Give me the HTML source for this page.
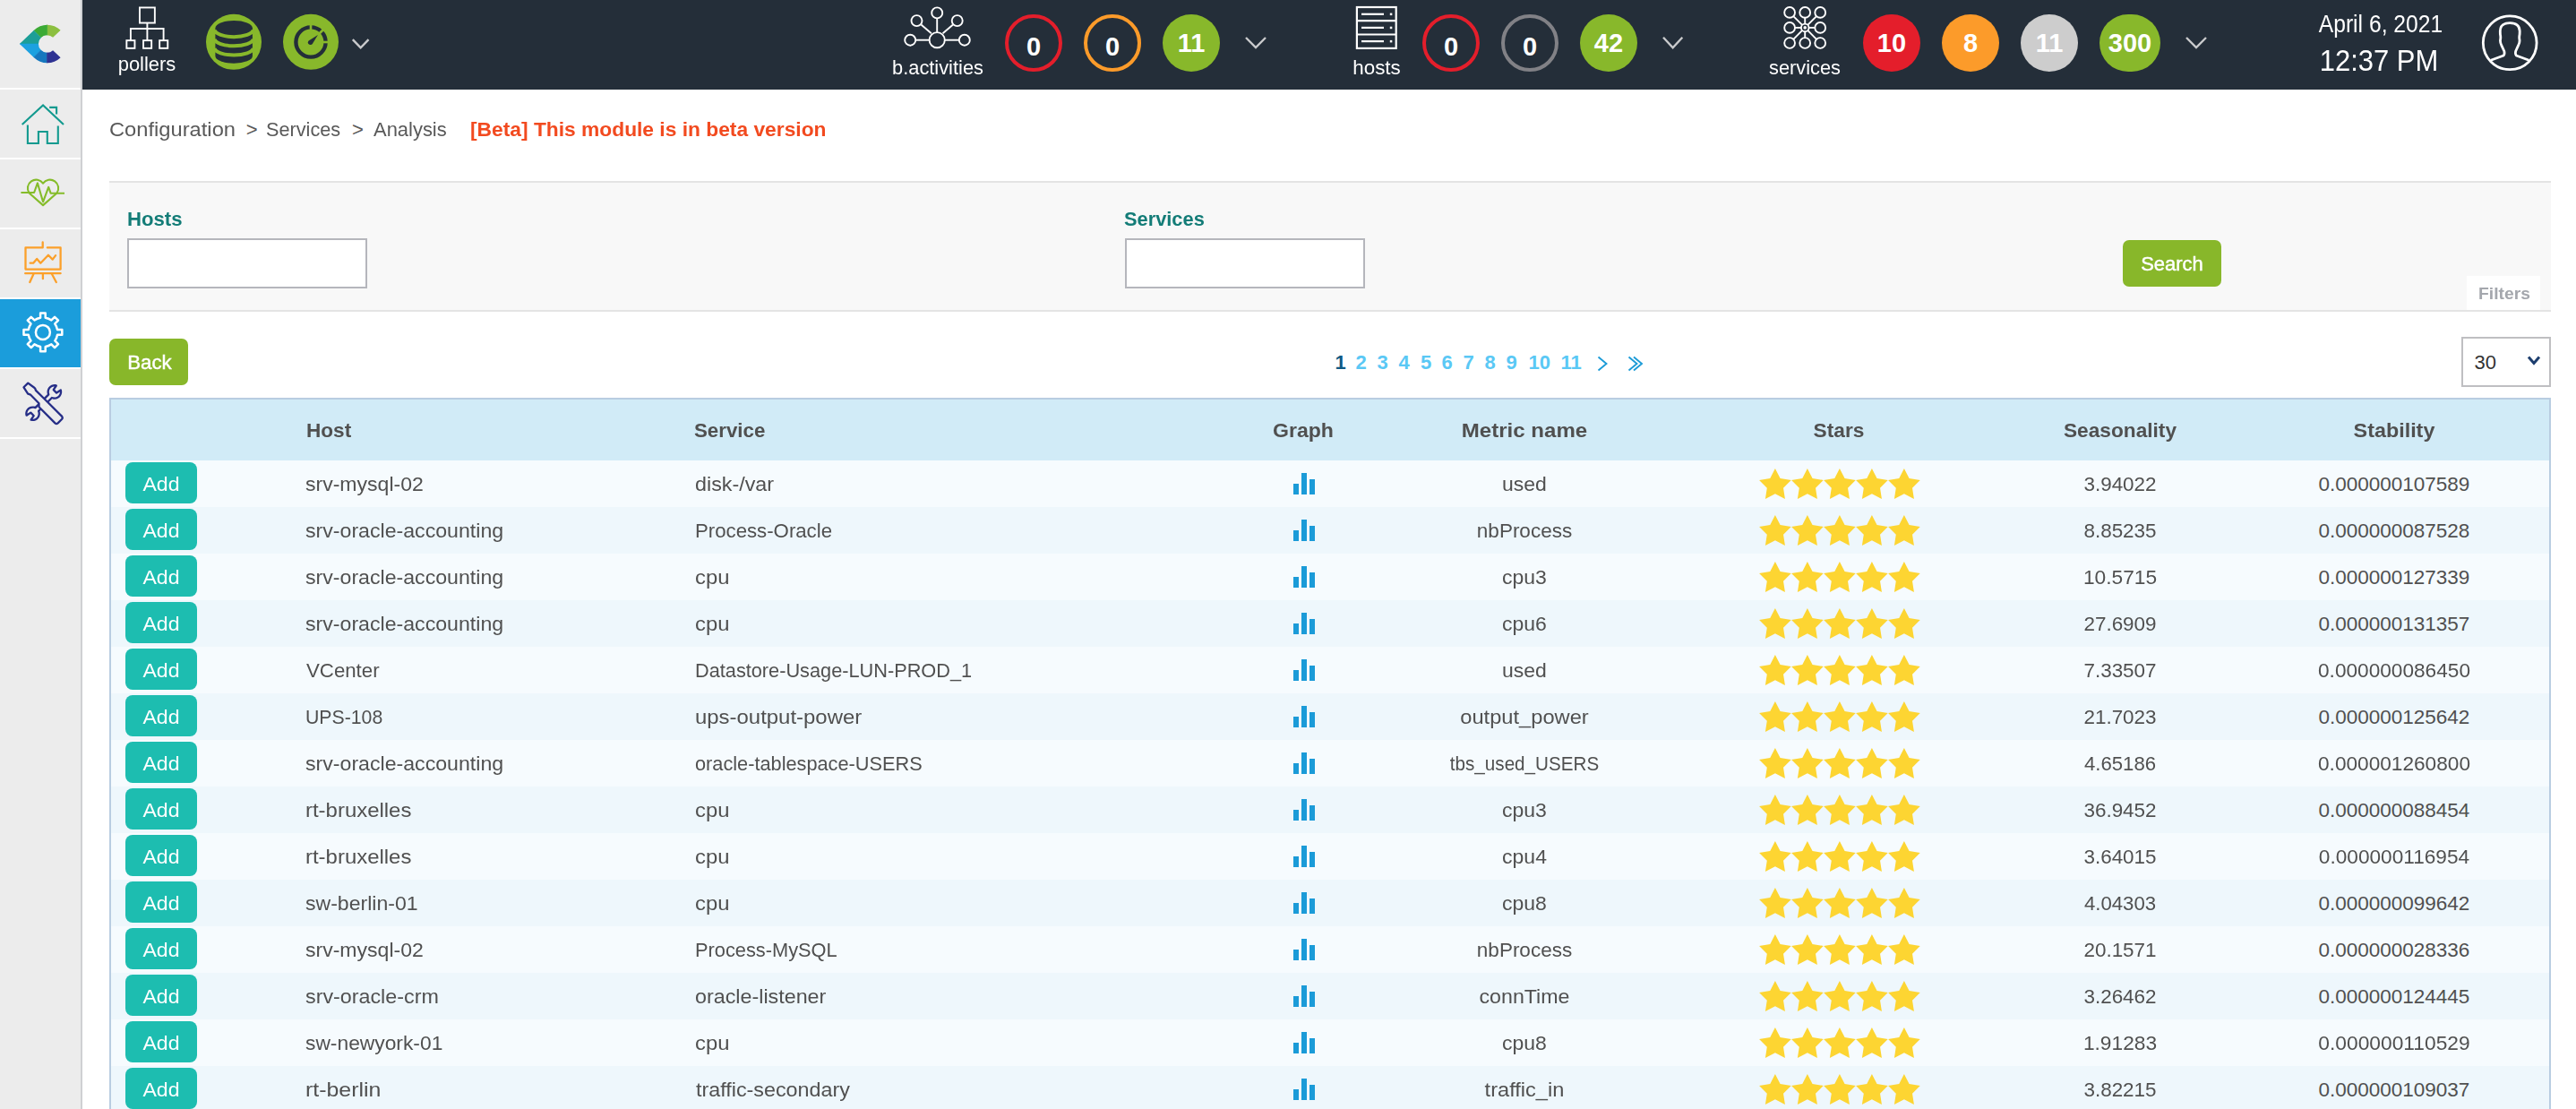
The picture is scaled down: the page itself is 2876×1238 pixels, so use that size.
<!DOCTYPE html>
<html><head><meta charset="utf-8"><title>Centreon - Analysis</title>
<style>
html,body{margin:0;padding:0;}
body{width:2876px;height:1238px;overflow:hidden;position:relative;background:#fff;font-family:"Liberation Sans", sans-serif;}
.b{position:absolute;}
.t{position:absolute;white-space:nowrap;}
</style></head><body>
<div class="b" style="left:0px;top:0px;width:90px;height:1238px;background:#ececec;"></div><div class="b" style="left:90px;top:0px;width:2px;height:1238px;background:#cfd0d3;"></div><div class="b" style="left:0px;top:98px;width:90px;height:2px;background:#ffffff;"></div><div class="b" style="left:0px;top:176px;width:90px;height:2px;background:#ffffff;"></div><div class="b" style="left:0px;top:254px;width:90px;height:2px;background:#ffffff;"></div><div class="b" style="left:0px;top:332px;width:90px;height:2px;background:#ffffff;"></div><div class="b" style="left:0px;top:410px;width:90px;height:2px;background:#ffffff;"></div><div class="b" style="left:0px;top:488px;width:90px;height:2px;background:#ffffff;"></div><div class="b" style="left:0px;top:334px;width:90px;height:76px;background:#1b9ddb;"></div><div class="b" style="left:92px;top:0px;width:2784px;height:100px;background:#242e39;"></div><svg class="b" style="left:0;top:0" width="2876" height="1238" viewBox="0 0 2876 1238"><clipPath id="lc"><path d="M21.9,49.0 L37.9,33.8 A21.3,21.3 0 0 1 67.6,33.8 L59.1,41.8 A9.7,9.7 0 1 0 59.1,56.2 L67.6,64.2 A21.3,21.3 0 0 1 37.9,64.2 Z"/></clipPath><filter id="lb" x="-10%" y="-10%" width="120%" height="120%"><feGaussianBlur stdDeviation="0.6"/></filter><g filter="url(#lb)"><g clip-path="url(#lc)"><polygon points="52.6,49.0 52.6,-11.0 112.6,-11.0 112.6,49.0" fill="#8cbf3f" stroke="#8cbf3f" stroke-width="0.6"/><polygon points="52.6,49.0 52.6,-11.0 -7.399999999999999,-11.0" fill="#3aaa35" stroke="#3aaa35" stroke-width="0.6"/><polygon points="52.6,49.0 -7.399999999999999,-11.0 -7.399999999999999,49.0" fill="#1a9e97" stroke="#1a9e97" stroke-width="0.6"/><polygon points="52.6,49.0 -7.399999999999999,49.0 -7.399999999999999,109.0" fill="#1da1e0" stroke="#1da1e0" stroke-width="0.6"/><polygon points="52.6,49.0 -7.399999999999999,109.0 52.6,109.0" fill="#1377be" stroke="#1377be" stroke-width="0.6"/><polygon points="52.6,49.0 52.6,109.0 112.6,109.0 112.6,49.0" fill="#2e3192" stroke="#2e3192" stroke-width="0.6"/></g></g><g fill="none" stroke="#139a8f" stroke-width="2.1" stroke-linecap="butt" stroke-linejoin="miter"><polyline points="24.7,139.1 48.05,117.4 71,139.1"/><polyline points="55.2,119.9 63.1,119.9 63.1,127.4"/><polyline points="30.9,139.4 30.9,160 42.9,160 42.9,147 52.8,147 52.8,160 64.8,160 64.8,140.4"/></g><g fill="none" stroke="#85bc2a" stroke-width="2.1" stroke-linejoin="round"><path d="M48.05,229.1 L32.6,215.5 A8.6,8.6 0 0 1 48.05,204.7 A8.6,8.6 0 0 1 63.5,215.5 Z"/><polyline points="23.4,215 38.1,215 41.9,204.4 48.05,225.3 54.2,208.9 56.6,215.7 72,215.7"/></g><g fill="none" stroke="#fba02a" stroke-width="2.3" stroke-linecap="round" stroke-linejoin="round"><polyline points="47.7,270.4 47.7,276.4 28.5,276.4 28.5,300.6 67.6,300.6 67.6,276.4 52.85,276.4"/><polyline points="33.65,293.7 37.1,293.7 41.2,288.9 45.3,293.7 53.9,284.8 58.7,289.6 62.1,285.1"/><line x1="28.2" y1="305.2" x2="67.6" y2="305.2"/><line x1="37.4" y1="306" x2="33.3" y2="315"/><line x1="47.9" y1="306" x2="47.9" y2="311.2"/><line x1="58" y1="306" x2="62.8" y2="315"/></g><path d="M45.10,354.74 L45.10,349.48 L50.70,349.48 L50.70,354.74 A16.4,16.4 0 0 1 57.35,357.49 L61.06,353.78 L65.02,357.74 L61.31,361.45 A16.4,16.4 0 0 1 64.06,368.10 L69.32,368.10 L69.32,373.70 L64.06,373.70 A16.4,16.4 0 0 1 61.31,380.35 L65.02,384.06 L61.06,388.02 L57.35,384.31 A16.4,16.4 0 0 1 50.70,387.06 L50.70,392.32 L45.10,392.32 L45.10,387.06 A16.4,16.4 0 0 1 38.45,384.31 L34.74,388.02 L30.78,384.06 L34.49,380.35 A16.4,16.4 0 0 1 31.74,373.70 L26.48,373.70 L26.48,368.10 L31.74,368.10 A16.4,16.4 0 0 1 34.49,361.45 L30.78,357.74 L34.74,353.78 L38.45,357.49 A16.4,16.4 0 0 1 45.10,354.74 Z" fill="none" stroke="#fff" stroke-width="2.5" stroke-linejoin="round"/><circle cx="47.9" cy="370.9" r="8.0" fill="none" stroke="#fff" stroke-width="2.5"/><path d="M43.12,458.85 L57.95,444.02 L57.95,444.02 L59.50,444.51 L61.12,444.63 L62.72,444.39 L64.23,443.80 L65.57,442.88 L66.67,441.69 L67.48,440.28 L67.95,438.73 L68.05,437.11 L67.80,435.51 L63.12,438.57 L59.73,435.18 L62.79,430.50 L61.19,430.25 L59.57,430.35 L58.02,430.82 L56.61,431.63 L55.42,432.73 L54.50,434.07 L53.91,435.58 L53.67,437.18 L53.79,438.80 L54.28,440.35 L39.45,455.18 L39.45,455.18 L37.90,454.69 L36.28,454.57 L34.68,454.81 L33.17,455.40 L31.83,456.32 L30.73,457.51 L29.92,458.92 L29.45,460.47 L29.35,462.09 L29.60,463.69 L34.28,460.63 L37.67,464.02 L34.61,468.70 L36.21,468.95 L37.83,468.85 L39.38,468.38 L40.79,467.57 L41.98,466.47 L42.90,465.13 L43.49,463.62 L43.73,462.02 L43.61,460.40 L43.12,458.85 Z" fill="none" stroke="#262e87" stroke-width="2.3" stroke-linejoin="round"/><g fill="#ececec" stroke="#262e87" stroke-width="2.3" stroke-linejoin="round" stroke-linecap="round"><path d="M26.5,432.3 L31.3,427.6 L38.6,433 Q39.8,434.2 39.8,435.6 L48.8,444.5 L69.2,464.9 Q70.4,466.5 69,468 L64.6,472.4 Q63,473.7 61.5,472.4 L43.5,454.2 L43.5,450.2 L34.2,440.8 Q33,440.1 31.2,439.6 Z"/></g><g fill="none" stroke="#fff" stroke-width="1.9"><rect x="155.95" y="8.45" width="16.9" height="17.1"/><line x1="164.4" y1="25.5" x2="164.4" y2="45"/><polyline points="145.9,45 145.9,32 182.6,32 182.6,45"/><rect x="141.35" y="45.15" width="9.1" height="8.7"/><rect x="160.05" y="45.15" width="9.1" height="8.7"/><rect x="178.15" y="45.15" width="9.1" height="8.7"/></g><circle cx="261" cy="46.8" r="31" fill="#88b82b"/><path d="M240.4,31.4 L240.4,62.5 A20.75,8.3 0 0 0 281.9,62.5 L281.9,31.4 A20.75,8.3 0 0 0 240.4,31.4 Z" fill="#242e39"/><g fill="none" stroke="#88b82b" stroke-width="4"><path d="M239.5,33.4 A21.7,8.3 0 0 0 282.8,33.4"/><path d="M239.5,43.6 A21.7,8.3 0 0 0 282.8,43.6"/><path d="M239.5,53.8 A21.7,8.3 0 0 0 282.8,53.8"/></g><circle cx="347" cy="46.8" r="31" fill="#88b82b"/><circle cx="347" cy="47" r="16.6" fill="none" stroke="#242e39" stroke-width="4.4"/><g stroke="#88b82b" stroke-width="2.6"><line x1="347" y1="47" x2="347" y2="25"/><line x1="347" y1="47" x2="363" y2="31"/><line x1="347" y1="47" x2="369" y2="47"/></g><circle cx="347" cy="47" r="12.3" fill="#88b82b"/><path d="M345,45.2 L354.9,39 L348.8,48.9 A2.7,2.7 0 1 1 345,45.2 Z" fill="#242e39"/><g fill="none" stroke="#fff" stroke-width="1.9"><circle cx="1046.2" cy="44.7" r="8.6"/><circle cx="1016.2" cy="44.7" r="6"/><circle cx="1076.8" cy="44.7" r="6"/><circle cx="1023.5" cy="23.1" r="6"/><circle cx="1068.7" cy="23.1" r="6"/><circle cx="1046.2" cy="14.4" r="6"/><line x1="1022.2" y1="44.7" x2="1037.6" y2="44.7"/><line x1="1054.8" y1="44.7" x2="1070.8" y2="44.7"/><line x1="1046.2" y1="20.4" x2="1046.2" y2="36.1"/><line x1="1028.4" y1="27.6" x2="1039.8" y2="37.2"/><line x1="1064" y1="27.6" x2="1052.6" y2="37.2"/></g><g fill="none" stroke="#fff" stroke-width="2.2"><rect x="1514.9" y="8" width="43.8" height="45.9"/><line x1="1514.9" y1="23.1" x2="1558.7" y2="23.1"/><line x1="1514.9" y1="38.5" x2="1558.7" y2="38.5"/><line x1="1520" y1="15.8" x2="1545" y2="15.8"/><line x1="1520" y1="30.9" x2="1545" y2="30.9"/><line x1="1520" y1="46.1" x2="1545" y2="46.1"/></g><g fill="#fff"><rect x="1551.8" y="14.6" width="2.5" height="2.5"/><rect x="1551.8" y="29.7" width="2.5" height="2.5"/><rect x="1551.8" y="44.9" width="2.5" height="2.5"/></g><g fill="none" stroke="#fff" stroke-width="1.9"><circle cx="1998.1" cy="13.9" r="5.9"/><circle cx="1998.1" cy="30.9" r="5.9"/><circle cx="1998.1" cy="48.0" r="5.9"/><circle cx="2015.2" cy="13.9" r="5.9"/><circle cx="2015.2" cy="48.0" r="5.9"/><circle cx="2032.2" cy="13.9" r="5.9"/><circle cx="2032.2" cy="30.9" r="5.9"/><circle cx="2032.2" cy="48.0" r="5.9"/><circle cx="2015.2" cy="30.9" r="4.3"/><line x1="2012.15" y1="27.87" x2="2002.28" y2="18.06"/><line x1="2010.90" y1="30.90" x2="2004.00" y2="30.90"/><line x1="2012.16" y1="33.94" x2="2002.27" y2="43.83"/><line x1="2015.20" y1="26.60" x2="2015.20" y2="19.80"/><line x1="2015.20" y1="35.20" x2="2015.20" y2="42.10"/><line x1="2018.24" y1="27.86" x2="2028.03" y2="18.07"/><line x1="2019.50" y1="30.90" x2="2026.30" y2="30.90"/><line x1="2018.23" y1="33.95" x2="2028.04" y2="43.82"/></g><circle cx="2015.2" cy="30.9" r="1.8" fill="#fff"/><g fill="none" stroke="#fff" stroke-width="2.8" stroke-linejoin="round"><circle cx="2802.2" cy="47.8" r="29.9"/><path d="M2780.9,67.2 L2795.2,62 Q2796.6,60.2 2795.8,57 L2792.8,50.6 Q2791,47.2 2791.6,44 Q2792.1,41.4 2791.4,38.2 L2791.3,34.8 Q2791.5,25.6 2802.2,25.6 Q2813,25.6 2813.2,34.8 L2813.1,38.2 Q2812.4,41.4 2812.9,44 Q2813.5,47.2 2811.6,50.6 L2808.7,57 Q2807.9,60.2 2809.3,62 L2823.5,67.2"/></g><polyline points="393.8,44.2 402.65,53.3 411.5,44.2" fill="none" stroke="#c9cacc" stroke-width="2.4"/><polyline points="1391,42 1402.0,53 1413,42" fill="none" stroke="#c9cacc" stroke-width="2.4"/><polyline points="1857,41.8 1867.65,53.3 1878.3,41.8" fill="none" stroke="#c9cacc" stroke-width="2.4"/><polyline points="2441,42 2452.0,53 2463,42" fill="none" stroke="#c9cacc" stroke-width="2.4"/></svg><div class="b" style="left:1122.0px;top:16.0px;width:64px;height:64px;border-radius:32.0px;border:4px solid #e41e2b;box-sizing:border-box;background:transparent;"></div><div class="t" id="t0" style="left:554.0px;width:1200px;text-align:center;top:38.2px;font-size:29px;line-height:29px;color:#fff;font-weight:bold;">0</div><div class="b" style="left:1210.0px;top:16.0px;width:64px;height:64px;border-radius:32.0px;border:4px solid #fc9b2a;box-sizing:border-box;background:transparent;"></div><div class="t" id="t1" style="left:642.0px;width:1200px;text-align:center;top:38.2px;font-size:29px;line-height:29px;color:#fff;font-weight:bold;">0</div><div class="b" style="left:1298.0px;top:16.0px;width:64px;height:64px;border-radius:32.0px;background:#88b82b;"></div><div class="t" id="t2" style="left:730.0px;width:1200px;text-align:center;top:34.3px;font-size:29px;line-height:29px;color:#fff;font-weight:bold;">11</div><div class="b" style="left:1588.0px;top:16.0px;width:64px;height:64px;border-radius:32.0px;border:4px solid #e41e2b;box-sizing:border-box;background:transparent;"></div><div class="t" id="t3" style="left:1020.0px;width:1200px;text-align:center;top:38.2px;font-size:29px;line-height:29px;color:#fff;font-weight:bold;">0</div><div class="b" style="left:1676.0px;top:16.0px;width:64px;height:64px;border-radius:32.0px;border:4px solid #818186;box-sizing:border-box;background:transparent;"></div><div class="t" id="t4" style="left:1108.0px;width:1200px;text-align:center;top:38.2px;font-size:29px;line-height:29px;color:#fff;font-weight:bold;">0</div><div class="b" style="left:1764.0px;top:16.0px;width:64px;height:64px;border-radius:32.0px;background:#88b82b;"></div><div class="t" id="t5" style="left:1196.0px;width:1200px;text-align:center;top:34.3px;font-size:29px;line-height:29px;color:#fff;font-weight:bold;">42</div><div class="b" style="left:2080.0px;top:16.0px;width:64px;height:64px;border-radius:32.0px;background:#e41e2b;"></div><div class="t" id="t6" style="left:1512.0px;width:1200px;text-align:center;top:34.3px;font-size:29px;line-height:29px;color:#fff;font-weight:bold;">10</div><div class="b" style="left:2168.0px;top:16.0px;width:64px;height:64px;border-radius:32.0px;background:#fc9b2a;"></div><div class="t" id="t7" style="left:1600.0px;width:1200px;text-align:center;top:34.3px;font-size:29px;line-height:29px;color:#fff;font-weight:bold;">8</div><div class="b" style="left:2256.0px;top:16.0px;width:64px;height:64px;border-radius:32.0px;background:#cdcdcd;"></div><div class="t" id="t8" style="left:1688.0px;width:1200px;text-align:center;top:34.3px;font-size:29px;line-height:29px;color:#fff;font-weight:bold;">11</div><div class="b" style="left:2344.0px;top:16.0px;width:68px;height:64px;border-radius:32.0px;background:#88b82b;"></div><div class="t" id="t9" style="left:1778.0px;width:1200px;text-align:center;top:34.3px;font-size:29px;line-height:29px;color:#fff;font-weight:bold;">300</div><div class="t" id="t10" style="left:-435.7px;width:1200px;text-align:center;top:62.4px;font-size:21.5px;line-height:21.5px;color:#fff;font-weight:normal;transform:scaleX(1.0199);transform-origin:50% 0;">pollers</div><div class="t" id="t11" style="left:446.8px;width:1200px;text-align:center;top:66.4px;font-size:21.5px;line-height:21.5px;color:#fff;font-weight:normal;transform:scaleX(1.0146);transform-origin:50% 0;">b.activities</div><div class="t" id="t12" style="left:936.8px;width:1200px;text-align:center;top:66.1px;font-size:21.5px;line-height:21.5px;color:#fff;font-weight:normal;transform:scaleX(1.0407);transform-origin:50% 0;">hosts</div><div class="t" id="t13" style="left:1415.3px;width:1200px;text-align:center;top:66.1px;font-size:21.5px;line-height:21.5px;color:#fff;font-weight:normal;transform:scaleX(1.0135);transform-origin:50% 0;">services</div><div class="t" id="t14" style="left:2057.9px;width:1200px;text-align:center;top:13.6px;font-size:27px;line-height:27px;color:#fff;font-weight:normal;transform:scaleX(0.9143);transform-origin:50% 0;">April 6, 2021</div><div class="t" id="t15" style="left:2055.8px;width:1200px;text-align:center;top:50.7px;font-size:33px;line-height:33px;color:#fff;font-weight:normal;transform:scaleX(0.9388);transform-origin:50% 0;">12:37 PM</div><div class="t" id="t16" style="left:121.6px;top:133.7px;font-size:22px;line-height:22px;color:#595959;font-weight:normal;transform:scaleX(1.0775);transform-origin:0 0;">Configuration</div><div class="t" id="t17" style="left:274.7px;top:133.7px;font-size:22px;line-height:22px;color:#595959;font-weight:normal;">&gt;</div><div class="t" id="t18" style="left:297.2px;top:133.7px;font-size:22px;line-height:22px;color:#595959;font-weight:normal;transform:scaleX(0.9859);transform-origin:0 0;">Services</div><div class="t" id="t19" style="left:393.0px;top:133.7px;font-size:22px;line-height:22px;color:#595959;font-weight:normal;">&gt;</div><div class="t" id="t20" style="left:417.0px;top:133.7px;font-size:22px;line-height:22px;color:#595959;font-weight:normal;transform:scaleX(0.9974);transform-origin:0 0;">Analysis</div><div class="t" id="t21" style="left:525.2px;top:133.7px;font-size:22px;line-height:22px;color:#f24a1f;font-weight:bold;transform:scaleX(1.0355);transform-origin:0 0;">[Beta] This module is in beta version</div><div class="b" style="left:122px;top:202px;width:2726px;height:146px;background:#f8f8f8;border-top:2px solid #e4e4e4;border-bottom:2px solid #e4e4e4;box-sizing:border-box;"></div><div class="t" id="t22" style="left:142.2px;top:234.1px;font-size:22px;line-height:22px;color:#137c77;font-weight:bold;transform:scaleX(1.0073);transform-origin:0 0;">Hosts</div><div class="t" id="t23" style="left:1255.2px;top:234.1px;font-size:22px;line-height:22px;color:#137c77;font-weight:bold;transform:scaleX(0.9916);transform-origin:0 0;">Services</div><div class="b" style="left:142px;top:266px;width:268px;height:56px;background:#fff;border:2px solid #b5b6bc;box-sizing:border-box;"></div><div class="b" style="left:1256px;top:266px;width:268px;height:56px;background:#fff;border:2px solid #b5b6bc;box-sizing:border-box;"></div><div class="b" style="left:2370px;top:268px;width:110px;height:52px;background:#88b72a;border-radius:7px;"></div><div class="t" id="t24" style="left:1824.8px;width:1200px;text-align:center;top:284.0px;font-size:22.5px;line-height:22.5px;color:#fff;font-weight:normal;transform:scaleX(0.9779);transform-origin:50% 0;-webkit-text-stroke:0.45px #fff;">Search</div><div class="b" style="left:2754px;top:308px;width:82px;height:38px;background:#fff;"></div><div class="t" id="t25" style="left:2195.7px;width:1200px;text-align:center;top:319.4px;font-size:18px;line-height:18px;color:#a4a7ad;font-weight:bold;transform:scaleX(1.0735);transform-origin:50% 0;">Filters</div><div class="b" style="left:122px;top:378px;width:88px;height:52px;background:#88b72a;border-radius:7px;"></div><div class="t" id="t26" style="left:-433.3px;width:1200px;text-align:center;top:393.6px;font-size:22.5px;line-height:22.5px;color:#fff;font-weight:normal;transform:scaleX(0.9881);transform-origin:50% 0;-webkit-text-stroke:0.45px #fff;">Back</div><div class="t" id="t27" style="left:1490.5px;top:394.0px;font-size:22px;line-height:22px;color:#0f5a84;font-weight:bold;">1</div><div class="t" id="t28" style="left:1513.5px;top:394.0px;font-size:22px;line-height:22px;color:#5ac8f5;font-weight:bold;">2</div><div class="t" id="t29" style="left:1537.5px;top:394.0px;font-size:22px;line-height:22px;color:#5ac8f5;font-weight:bold;">3</div><div class="t" id="t30" style="left:1561.5px;top:394.0px;font-size:22px;line-height:22px;color:#5ac8f5;font-weight:bold;">4</div><div class="t" id="t31" style="left:1586.0px;top:394.0px;font-size:22px;line-height:22px;color:#5ac8f5;font-weight:bold;">5</div><div class="t" id="t32" style="left:1609.5px;top:394.0px;font-size:22px;line-height:22px;color:#5ac8f5;font-weight:bold;">6</div><div class="t" id="t33" style="left:1633.5px;top:394.0px;font-size:22px;line-height:22px;color:#5ac8f5;font-weight:bold;">7</div><div class="t" id="t34" style="left:1657.5px;top:394.0px;font-size:22px;line-height:22px;color:#5ac8f5;font-weight:bold;">8</div><div class="t" id="t35" style="left:1681.5px;top:394.0px;font-size:22px;line-height:22px;color:#5ac8f5;font-weight:bold;">9</div><div class="t" id="t36" style="left:1706.5px;top:394.0px;font-size:22px;line-height:22px;color:#5ac8f5;font-weight:bold;">10</div><div class="t" id="t37" style="left:1742.5px;top:394.0px;font-size:22px;line-height:22px;color:#5ac8f5;font-weight:bold;">11</div><svg class="b" style="left:1770px;top:390px" width="80" height="30" viewBox="1770 390 80 30"><polyline points="1784.5,398.5 1793.5,406 1784.5,413.5" fill="none" stroke="#1c9bd7" stroke-width="1.9"/><polyline points="1818.5,398.5 1827.5,406 1818.5,413.5" fill="none" stroke="#1c9bd7" stroke-width="1.9"/><polyline points="1824,398.5 1833,406 1824,413.5" fill="none" stroke="#1c9bd7" stroke-width="1.9"/></svg><div class="b" style="left:2748px;top:376px;width:100px;height:56px;background:#fff;border:2px solid #bfbfc2;box-sizing:border-box;"></div><div class="t" id="t38" style="left:2762.5px;top:393.8px;font-size:22px;line-height:22px;color:#333;font-weight:normal;">30</div><svg class="b" style="left:2815px;top:390px" width="30" height="25" viewBox="2815 390 30 25"><polyline points="2823,398.5 2829,405.5 2835,398.5" fill="none" stroke="#1d3e6e" stroke-width="3"/></svg><div class="b" style="left:122px;top:444px;width:2726px;height:804px;border:2px solid #b9cde1;box-sizing:border-box;background:#fff;"></div><div class="b" style="left:124px;top:446px;width:2722px;height:68px;background:#d1ebf7;"></div><div class="t" id="t39" style="left:342.0px;top:470.0px;font-size:22px;line-height:22px;color:#505050;font-weight:bold;transform:scaleX(1.0256);transform-origin:0 0;">Host</div><div class="t" id="t40" style="left:775.0px;top:470.0px;font-size:22px;line-height:22px;color:#505050;font-weight:bold;transform:scaleX(1.0132);transform-origin:0 0;">Service</div><div class="t" id="t41" style="left:854.7px;width:1200px;text-align:center;top:470.0px;font-size:22px;line-height:22px;color:#505050;font-weight:bold;transform:scaleX(1.0476);transform-origin:50% 0;">Graph</div><div class="t" id="t42" style="left:1102.2px;width:1200px;text-align:center;top:470.0px;font-size:22px;line-height:22px;color:#505050;font-weight:bold;transform:scaleX(1.0933);transform-origin:50% 0;">Metric name</div><div class="t" id="t43" style="left:1453.0px;width:1200px;text-align:center;top:470.0px;font-size:22px;line-height:22px;color:#505050;font-weight:bold;transform:scaleX(1.0317);transform-origin:50% 0;">Stars</div><div class="t" id="t44" style="left:1766.8px;width:1200px;text-align:center;top:470.0px;font-size:22px;line-height:22px;color:#505050;font-weight:bold;transform:scaleX(1.0307);transform-origin:50% 0;">Seasonality</div><div class="t" id="t45" style="left:2072.9px;width:1200px;text-align:center;top:470.0px;font-size:22px;line-height:22px;color:#505050;font-weight:bold;transform:scaleX(1.0605);transform-origin:50% 0;">Stability</div><div class="b" style="left:124px;top:514px;width:2722px;height:52px;background:#f6fbfe;"></div><div class="b" style="left:140px;top:516px;width:80px;height:46px;background:#1dbdb0;border-radius:8px;"></div><div class="t" id="t46" style="left:-420.0px;width:1200px;text-align:center;top:529.9px;font-size:22.5px;line-height:22.5px;color:#fff;font-weight:normal;transform:scaleX(1.0264);transform-origin:50% 0;">Add</div><div class="t" id="t47" style="left:341.3px;top:529.9px;font-size:22.5px;line-height:22.5px;color:#505050;font-weight:normal;transform:scaleX(1.0236);transform-origin:0 0;">srv-mysql-02</div><div class="t" id="t48" style="left:775.7px;top:529.9px;font-size:22.5px;line-height:22.5px;color:#505050;font-weight:normal;transform:scaleX(1.0354);transform-origin:0 0;">disk-/var</div><div class="t" id="t49" style="left:1102.0px;width:1200px;text-align:center;top:529.9px;font-size:22.5px;line-height:22.5px;color:#505050;font-weight:normal;transform:scaleX(1.0213);transform-origin:50% 0;">used</div><div class="t" id="t50" style="left:1766.8px;width:1200px;text-align:center;top:529.9px;font-size:22.5px;line-height:22.5px;color:#505050;font-weight:normal;transform:scaleX(0.9977);transform-origin:50% 0;">3.94022</div><div class="t" id="t51" style="left:2072.9px;width:1200px;text-align:center;top:529.9px;font-size:22.5px;line-height:22.5px;color:#505050;font-weight:normal;transform:scaleX(1.0000);transform-origin:50% 0;">0.000000107589</div><div class="b" style="left:124px;top:566px;width:2722px;height:52px;background:#eef7fc;"></div><div class="b" style="left:140px;top:568px;width:80px;height:46px;background:#1dbdb0;border-radius:8px;"></div><div class="t" id="t52" style="left:-420.0px;width:1200px;text-align:center;top:581.9px;font-size:22.5px;line-height:22.5px;color:#fff;font-weight:normal;transform:scaleX(1.0264);transform-origin:50% 0;">Add</div><div class="t" id="t53" style="left:341.3px;top:581.9px;font-size:22.5px;line-height:22.5px;color:#505050;font-weight:normal;transform:scaleX(1.0282);transform-origin:0 0;">srv-oracle-accounting</div><div class="t" id="t54" style="left:775.7px;top:581.9px;font-size:22.5px;line-height:22.5px;color:#505050;font-weight:normal;transform:scaleX(0.9869);transform-origin:0 0;">Process-Oracle</div><div class="t" id="t55" style="left:1102.0px;width:1200px;text-align:center;top:581.9px;font-size:22.5px;line-height:22.5px;color:#505050;font-weight:normal;transform:scaleX(0.9996);transform-origin:50% 0;">nbProcess</div><div class="t" id="t56" style="left:1766.8px;width:1200px;text-align:center;top:581.9px;font-size:22.5px;line-height:22.5px;color:#505050;font-weight:normal;transform:scaleX(0.9977);transform-origin:50% 0;">8.85235</div><div class="t" id="t57" style="left:2072.9px;width:1200px;text-align:center;top:581.9px;font-size:22.5px;line-height:22.5px;color:#505050;font-weight:normal;transform:scaleX(1.0000);transform-origin:50% 0;">0.000000087528</div><div class="b" style="left:124px;top:618px;width:2722px;height:52px;background:#f6fbfe;"></div><div class="b" style="left:140px;top:620px;width:80px;height:46px;background:#1dbdb0;border-radius:8px;"></div><div class="t" id="t58" style="left:-420.0px;width:1200px;text-align:center;top:633.9px;font-size:22.5px;line-height:22.5px;color:#fff;font-weight:normal;transform:scaleX(1.0264);transform-origin:50% 0;">Add</div><div class="t" id="t59" style="left:341.3px;top:633.9px;font-size:22.5px;line-height:22.5px;color:#505050;font-weight:normal;transform:scaleX(1.0282);transform-origin:0 0;">srv-oracle-accounting</div><div class="t" id="t60" style="left:775.7px;top:633.9px;font-size:22.5px;line-height:22.5px;color:#505050;font-weight:normal;transform:scaleX(1.0588);transform-origin:0 0;">cpu</div><div class="t" id="t61" style="left:1102.0px;width:1200px;text-align:center;top:633.9px;font-size:22.5px;line-height:22.5px;color:#505050;font-weight:normal;transform:scaleX(1.0213);transform-origin:50% 0;">cpu3</div><div class="t" id="t62" style="left:1766.8px;width:1200px;text-align:center;top:633.9px;font-size:22.5px;line-height:22.5px;color:#505050;font-weight:normal;transform:scaleX(1.0104);transform-origin:50% 0;">10.5715</div><div class="t" id="t63" style="left:2072.9px;width:1200px;text-align:center;top:633.9px;font-size:22.5px;line-height:22.5px;color:#505050;font-weight:normal;transform:scaleX(1.0000);transform-origin:50% 0;">0.000000127339</div><div class="b" style="left:124px;top:670px;width:2722px;height:52px;background:#eef7fc;"></div><div class="b" style="left:140px;top:672px;width:80px;height:46px;background:#1dbdb0;border-radius:8px;"></div><div class="t" id="t64" style="left:-420.0px;width:1200px;text-align:center;top:685.9px;font-size:22.5px;line-height:22.5px;color:#fff;font-weight:normal;transform:scaleX(1.0264);transform-origin:50% 0;">Add</div><div class="t" id="t65" style="left:341.3px;top:685.9px;font-size:22.5px;line-height:22.5px;color:#505050;font-weight:normal;transform:scaleX(1.0282);transform-origin:0 0;">srv-oracle-accounting</div><div class="t" id="t66" style="left:775.7px;top:685.9px;font-size:22.5px;line-height:22.5px;color:#505050;font-weight:normal;transform:scaleX(1.0588);transform-origin:0 0;">cpu</div><div class="t" id="t67" style="left:1102.0px;width:1200px;text-align:center;top:685.9px;font-size:22.5px;line-height:22.5px;color:#505050;font-weight:normal;transform:scaleX(1.0213);transform-origin:50% 0;">cpu6</div><div class="t" id="t68" style="left:1766.8px;width:1200px;text-align:center;top:685.9px;font-size:22.5px;line-height:22.5px;color:#505050;font-weight:normal;transform:scaleX(0.9979);transform-origin:50% 0;">27.6909</div><div class="t" id="t69" style="left:2072.9px;width:1200px;text-align:center;top:685.9px;font-size:22.5px;line-height:22.5px;color:#505050;font-weight:normal;transform:scaleX(1.0000);transform-origin:50% 0;">0.000000131357</div><div class="b" style="left:124px;top:722px;width:2722px;height:52px;background:#f6fbfe;"></div><div class="b" style="left:140px;top:724px;width:80px;height:46px;background:#1dbdb0;border-radius:8px;"></div><div class="t" id="t70" style="left:-420.0px;width:1200px;text-align:center;top:737.9px;font-size:22.5px;line-height:22.5px;color:#fff;font-weight:normal;transform:scaleX(1.0264);transform-origin:50% 0;">Add</div><div class="t" id="t71" style="left:342.3px;top:737.9px;font-size:22.5px;line-height:22.5px;color:#505050;font-weight:normal;transform:scaleX(0.9880);transform-origin:0 0;">VCenter</div><div class="t" id="t72" style="left:775.7px;top:737.9px;font-size:22.5px;line-height:22.5px;color:#505050;font-weight:normal;transform:scaleX(0.9656);transform-origin:0 0;">Datastore-Usage-LUN-PROD_1</div><div class="t" id="t73" style="left:1102.0px;width:1200px;text-align:center;top:737.9px;font-size:22.5px;line-height:22.5px;color:#505050;font-weight:normal;transform:scaleX(1.0213);transform-origin:50% 0;">used</div><div class="t" id="t74" style="left:1766.8px;width:1200px;text-align:center;top:737.9px;font-size:22.5px;line-height:22.5px;color:#505050;font-weight:normal;transform:scaleX(0.9979);transform-origin:50% 0;">7.33507</div><div class="t" id="t75" style="left:2072.9px;width:1200px;text-align:center;top:737.9px;font-size:22.5px;line-height:22.5px;color:#505050;font-weight:normal;transform:scaleX(1.0061);transform-origin:50% 0;">0.000000086450</div><div class="b" style="left:124px;top:774px;width:2722px;height:52px;background:#eef7fc;"></div><div class="b" style="left:140px;top:776px;width:80px;height:46px;background:#1dbdb0;border-radius:8px;"></div><div class="t" id="t76" style="left:-420.0px;width:1200px;text-align:center;top:789.9px;font-size:22.5px;line-height:22.5px;color:#fff;font-weight:normal;transform:scaleX(1.0264);transform-origin:50% 0;">Add</div><div class="t" id="t77" style="left:341.3px;top:789.9px;font-size:22.5px;line-height:22.5px;color:#505050;font-weight:normal;transform:scaleX(0.9444);transform-origin:0 0;">UPS-108</div><div class="t" id="t78" style="left:775.7px;top:789.9px;font-size:22.5px;line-height:22.5px;color:#505050;font-weight:normal;transform:scaleX(1.0633);transform-origin:0 0;">ups-output-power</div><div class="t" id="t79" style="left:1102.0px;width:1200px;text-align:center;top:789.9px;font-size:22.5px;line-height:22.5px;color:#505050;font-weight:normal;transform:scaleX(1.0516);transform-origin:50% 0;">output_power</div><div class="t" id="t80" style="left:1766.8px;width:1200px;text-align:center;top:789.9px;font-size:22.5px;line-height:22.5px;color:#505050;font-weight:normal;transform:scaleX(0.9979);transform-origin:50% 0;">21.7023</div><div class="t" id="t81" style="left:2072.9px;width:1200px;text-align:center;top:789.9px;font-size:22.5px;line-height:22.5px;color:#505050;font-weight:normal;transform:scaleX(1.0000);transform-origin:50% 0;">0.000000125642</div><div class="b" style="left:124px;top:826px;width:2722px;height:52px;background:#f6fbfe;"></div><div class="b" style="left:140px;top:828px;width:80px;height:46px;background:#1dbdb0;border-radius:8px;"></div><div class="t" id="t82" style="left:-420.0px;width:1200px;text-align:center;top:841.9px;font-size:22.5px;line-height:22.5px;color:#fff;font-weight:normal;transform:scaleX(1.0264);transform-origin:50% 0;">Add</div><div class="t" id="t83" style="left:341.3px;top:841.9px;font-size:22.5px;line-height:22.5px;color:#505050;font-weight:normal;transform:scaleX(1.0282);transform-origin:0 0;">srv-oracle-accounting</div><div class="t" id="t84" style="left:775.7px;top:841.9px;font-size:22.5px;line-height:22.5px;color:#505050;font-weight:normal;transform:scaleX(0.9658);transform-origin:0 0;">oracle-tablespace-USERS</div><div class="t" id="t85" style="left:1102.0px;width:1200px;text-align:center;top:841.9px;font-size:22.5px;line-height:22.5px;color:#505050;font-weight:normal;transform:scaleX(0.9171);transform-origin:50% 0;">tbs_used_USERS</div><div class="t" id="t86" style="left:1766.8px;width:1200px;text-align:center;top:841.9px;font-size:22.5px;line-height:22.5px;color:#505050;font-weight:normal;transform:scaleX(0.9851);transform-origin:50% 0;">4.65186</div><div class="t" id="t87" style="left:2072.9px;width:1200px;text-align:center;top:841.9px;font-size:22.5px;line-height:22.5px;color:#505050;font-weight:normal;transform:scaleX(1.0061);transform-origin:50% 0;">0.000001260800</div><div class="b" style="left:124px;top:878px;width:2722px;height:52px;background:#eef7fc;"></div><div class="b" style="left:140px;top:880px;width:80px;height:46px;background:#1dbdb0;border-radius:8px;"></div><div class="t" id="t88" style="left:-420.0px;width:1200px;text-align:center;top:893.9px;font-size:22.5px;line-height:22.5px;color:#fff;font-weight:normal;transform:scaleX(1.0264);transform-origin:50% 0;">Add</div><div class="t" id="t89" style="left:341.3px;top:893.9px;font-size:22.5px;line-height:22.5px;color:#505050;font-weight:normal;transform:scaleX(1.0639);transform-origin:0 0;">rt-bruxelles</div><div class="t" id="t90" style="left:775.7px;top:893.9px;font-size:22.5px;line-height:22.5px;color:#505050;font-weight:normal;transform:scaleX(1.0588);transform-origin:0 0;">cpu</div><div class="t" id="t91" style="left:1102.0px;width:1200px;text-align:center;top:893.9px;font-size:22.5px;line-height:22.5px;color:#505050;font-weight:normal;transform:scaleX(1.0213);transform-origin:50% 0;">cpu3</div><div class="t" id="t92" style="left:1766.8px;width:1200px;text-align:center;top:893.9px;font-size:22.5px;line-height:22.5px;color:#505050;font-weight:normal;transform:scaleX(0.9977);transform-origin:50% 0;">36.9452</div><div class="t" id="t93" style="left:2072.9px;width:1200px;text-align:center;top:893.9px;font-size:22.5px;line-height:22.5px;color:#505050;font-weight:normal;transform:scaleX(1.0000);transform-origin:50% 0;">0.000000088454</div><div class="b" style="left:124px;top:930px;width:2722px;height:52px;background:#f6fbfe;"></div><div class="b" style="left:140px;top:932px;width:80px;height:46px;background:#1dbdb0;border-radius:8px;"></div><div class="t" id="t94" style="left:-420.0px;width:1200px;text-align:center;top:945.9px;font-size:22.5px;line-height:22.5px;color:#fff;font-weight:normal;transform:scaleX(1.0264);transform-origin:50% 0;">Add</div><div class="t" id="t95" style="left:341.3px;top:945.9px;font-size:22.5px;line-height:22.5px;color:#505050;font-weight:normal;transform:scaleX(1.0639);transform-origin:0 0;">rt-bruxelles</div><div class="t" id="t96" style="left:775.7px;top:945.9px;font-size:22.5px;line-height:22.5px;color:#505050;font-weight:normal;transform:scaleX(1.0588);transform-origin:0 0;">cpu</div><div class="t" id="t97" style="left:1102.0px;width:1200px;text-align:center;top:945.9px;font-size:22.5px;line-height:22.5px;color:#505050;font-weight:normal;transform:scaleX(1.0217);transform-origin:50% 0;">cpu4</div><div class="t" id="t98" style="left:1766.8px;width:1200px;text-align:center;top:945.9px;font-size:22.5px;line-height:22.5px;color:#505050;font-weight:normal;transform:scaleX(0.9977);transform-origin:50% 0;">3.64015</div><div class="t" id="t99" style="left:2072.9px;width:1200px;text-align:center;top:945.9px;font-size:22.5px;line-height:22.5px;color:#505050;font-weight:normal;transform:scaleX(1.0060);transform-origin:50% 0;">0.000000116954</div><div class="b" style="left:124px;top:982px;width:2722px;height:52px;background:#eef7fc;"></div><div class="b" style="left:140px;top:984px;width:80px;height:46px;background:#1dbdb0;border-radius:8px;"></div><div class="t" id="t100" style="left:-420.0px;width:1200px;text-align:center;top:997.9px;font-size:22.5px;line-height:22.5px;color:#fff;font-weight:normal;transform:scaleX(1.0264);transform-origin:50% 0;">Add</div><div class="t" id="t101" style="left:341.3px;top:997.9px;font-size:22.5px;line-height:22.5px;color:#505050;font-weight:normal;transform:scaleX(1.0247);transform-origin:0 0;">sw-berlin-01</div><div class="t" id="t102" style="left:775.7px;top:997.9px;font-size:22.5px;line-height:22.5px;color:#505050;font-weight:normal;transform:scaleX(1.0588);transform-origin:0 0;">cpu</div><div class="t" id="t103" style="left:1102.0px;width:1200px;text-align:center;top:997.9px;font-size:22.5px;line-height:22.5px;color:#505050;font-weight:normal;transform:scaleX(1.0212);transform-origin:50% 0;">cpu8</div><div class="t" id="t104" style="left:1766.8px;width:1200px;text-align:center;top:997.9px;font-size:22.5px;line-height:22.5px;color:#505050;font-weight:normal;transform:scaleX(0.9851);transform-origin:50% 0;">4.04303</div><div class="t" id="t105" style="left:2072.9px;width:1200px;text-align:center;top:997.9px;font-size:22.5px;line-height:22.5px;color:#505050;font-weight:normal;transform:scaleX(1.0000);transform-origin:50% 0;">0.000000099642</div><div class="b" style="left:124px;top:1034px;width:2722px;height:52px;background:#f6fbfe;"></div><div class="b" style="left:140px;top:1036px;width:80px;height:46px;background:#1dbdb0;border-radius:8px;"></div><div class="t" id="t106" style="left:-420.0px;width:1200px;text-align:center;top:1049.9px;font-size:22.5px;line-height:22.5px;color:#fff;font-weight:normal;transform:scaleX(1.0264);transform-origin:50% 0;">Add</div><div class="t" id="t107" style="left:341.3px;top:1049.9px;font-size:22.5px;line-height:22.5px;color:#505050;font-weight:normal;transform:scaleX(1.0236);transform-origin:0 0;">srv-mysql-02</div><div class="t" id="t108" style="left:775.7px;top:1049.9px;font-size:22.5px;line-height:22.5px;color:#505050;font-weight:normal;transform:scaleX(0.9690);transform-origin:0 0;">Process-MySQL</div><div class="t" id="t109" style="left:1102.0px;width:1200px;text-align:center;top:1049.9px;font-size:22.5px;line-height:22.5px;color:#505050;font-weight:normal;transform:scaleX(0.9996);transform-origin:50% 0;">nbProcess</div><div class="t" id="t110" style="left:1766.8px;width:1200px;text-align:center;top:1049.9px;font-size:22.5px;line-height:22.5px;color:#505050;font-weight:normal;transform:scaleX(0.9979);transform-origin:50% 0;">20.1571</div><div class="t" id="t111" style="left:2072.9px;width:1200px;text-align:center;top:1049.9px;font-size:22.5px;line-height:22.5px;color:#505050;font-weight:normal;transform:scaleX(1.0000);transform-origin:50% 0;">0.000000028336</div><div class="b" style="left:124px;top:1086px;width:2722px;height:52px;background:#eef7fc;"></div><div class="b" style="left:140px;top:1088px;width:80px;height:46px;background:#1dbdb0;border-radius:8px;"></div><div class="t" id="t112" style="left:-420.0px;width:1200px;text-align:center;top:1101.9px;font-size:22.5px;line-height:22.5px;color:#fff;font-weight:normal;transform:scaleX(1.0264);transform-origin:50% 0;">Add</div><div class="t" id="t113" style="left:341.3px;top:1101.9px;font-size:22.5px;line-height:22.5px;color:#505050;font-weight:normal;transform:scaleX(1.0352);transform-origin:0 0;">srv-oracle-crm</div><div class="t" id="t114" style="left:775.7px;top:1101.9px;font-size:22.5px;line-height:22.5px;color:#505050;font-weight:normal;transform:scaleX(1.0355);transform-origin:0 0;">oracle-listener</div><div class="t" id="t115" style="left:1102.0px;width:1200px;text-align:center;top:1101.9px;font-size:22.5px;line-height:22.5px;color:#505050;font-weight:normal;transform:scaleX(1.0308);transform-origin:50% 0;">connTime</div><div class="t" id="t116" style="left:1766.8px;width:1200px;text-align:center;top:1101.9px;font-size:22.5px;line-height:22.5px;color:#505050;font-weight:normal;transform:scaleX(0.9977);transform-origin:50% 0;">3.26462</div><div class="t" id="t117" style="left:2072.9px;width:1200px;text-align:center;top:1101.9px;font-size:22.5px;line-height:22.5px;color:#505050;font-weight:normal;transform:scaleX(1.0000);transform-origin:50% 0;">0.000000124445</div><div class="b" style="left:124px;top:1138px;width:2722px;height:52px;background:#f6fbfe;"></div><div class="b" style="left:140px;top:1140px;width:80px;height:46px;background:#1dbdb0;border-radius:8px;"></div><div class="t" id="t118" style="left:-420.0px;width:1200px;text-align:center;top:1153.9px;font-size:22.5px;line-height:22.5px;color:#fff;font-weight:normal;transform:scaleX(1.0264);transform-origin:50% 0;">Add</div><div class="t" id="t119" style="left:341.3px;top:1153.9px;font-size:22.5px;line-height:22.5px;color:#505050;font-weight:normal;transform:scaleX(1.0134);transform-origin:0 0;">sw-newyork-01</div><div class="t" id="t120" style="left:775.7px;top:1153.9px;font-size:22.5px;line-height:22.5px;color:#505050;font-weight:normal;transform:scaleX(1.0588);transform-origin:0 0;">cpu</div><div class="t" id="t121" style="left:1102.0px;width:1200px;text-align:center;top:1153.9px;font-size:22.5px;line-height:22.5px;color:#505050;font-weight:normal;transform:scaleX(1.0212);transform-origin:50% 0;">cpu8</div><div class="t" id="t122" style="left:1766.8px;width:1200px;text-align:center;top:1153.9px;font-size:22.5px;line-height:22.5px;color:#505050;font-weight:normal;transform:scaleX(1.0104);transform-origin:50% 0;">1.91283</div><div class="t" id="t123" style="left:2072.9px;width:1200px;text-align:center;top:1153.9px;font-size:22.5px;line-height:22.5px;color:#505050;font-weight:normal;transform:scaleX(1.0120);transform-origin:50% 0;">0.000000110529</div><div class="b" style="left:124px;top:1190px;width:2722px;height:52px;background:#eef7fc;"></div><div class="b" style="left:140px;top:1192px;width:80px;height:46px;background:#1dbdb0;border-radius:8px;"></div><div class="t" id="t124" style="left:-420.0px;width:1200px;text-align:center;top:1205.9px;font-size:22.5px;line-height:22.5px;color:#fff;font-weight:normal;transform:scaleX(1.0264);transform-origin:50% 0;">Add</div><div class="t" id="t125" style="left:341.3px;top:1205.9px;font-size:22.5px;line-height:22.5px;color:#505050;font-weight:normal;transform:scaleX(1.1069);transform-origin:0 0;">rt-berlin</div><div class="t" id="t126" style="left:776.7px;top:1205.9px;font-size:22.5px;line-height:22.5px;color:#505050;font-weight:normal;transform:scaleX(1.0361);transform-origin:0 0;">traffic-secondary</div><div class="t" id="t127" style="left:1102.0px;width:1200px;text-align:center;top:1205.9px;font-size:22.5px;line-height:22.5px;color:#505050;font-weight:normal;transform:scaleX(1.0488);transform-origin:50% 0;">traffic_in</div><div class="t" id="t128" style="left:1766.8px;width:1200px;text-align:center;top:1205.9px;font-size:22.5px;line-height:22.5px;color:#505050;font-weight:normal;transform:scaleX(0.9977);transform-origin:50% 0;">3.82215</div><div class="t" id="t129" style="left:2072.9px;width:1200px;text-align:center;top:1205.9px;font-size:22.5px;line-height:22.5px;color:#505050;font-weight:normal;transform:scaleX(1.0000);transform-origin:50% 0;">0.000000109037</div><svg class="b" style="left:0;top:0" width="2876" height="1238" viewBox="0 0 2876 1238"><g fill="#1b9bd8"><rect x="1444" y="540" width="6" height="12"/><rect x="1453" y="528" width="6" height="24"/><rect x="1462" y="535" width="6" height="17"/><g fill="#fdd532"><polygon points="1981.90,523.00 1987.54,533.97 1999.72,535.95 1991.03,544.71 1992.92,556.90 1981.90,551.34 1970.88,556.90 1972.77,544.71 1964.08,535.95 1976.26,533.97"/></g><g fill="#fdd532"><polygon points="2017.90,523.00 2023.54,533.97 2035.72,535.95 2027.03,544.71 2028.92,556.90 2017.90,551.34 2006.88,556.90 2008.77,544.71 2000.08,535.95 2012.26,533.97"/></g><g fill="#fdd532"><polygon points="2053.90,523.00 2059.54,533.97 2071.72,535.95 2063.03,544.71 2064.92,556.90 2053.90,551.34 2042.88,556.90 2044.77,544.71 2036.08,535.95 2048.26,533.97"/></g><g fill="#fdd532"><polygon points="2089.90,523.00 2095.54,533.97 2107.72,535.95 2099.03,544.71 2100.92,556.90 2089.90,551.34 2078.88,556.90 2080.77,544.71 2072.08,535.95 2084.26,533.97"/></g><g fill="#fdd532"><polygon points="2125.90,523.00 2131.54,533.97 2143.72,535.95 2135.03,544.71 2136.92,556.90 2125.90,551.34 2114.88,556.90 2116.77,544.71 2108.08,535.95 2120.26,533.97"/></g><rect x="1444" y="592" width="6" height="12"/><rect x="1453" y="580" width="6" height="24"/><rect x="1462" y="587" width="6" height="17"/><g fill="#fdd532"><polygon points="1981.90,575.00 1987.54,585.97 1999.72,587.95 1991.03,596.71 1992.92,608.90 1981.90,603.34 1970.88,608.90 1972.77,596.71 1964.08,587.95 1976.26,585.97"/></g><g fill="#fdd532"><polygon points="2017.90,575.00 2023.54,585.97 2035.72,587.95 2027.03,596.71 2028.92,608.90 2017.90,603.34 2006.88,608.90 2008.77,596.71 2000.08,587.95 2012.26,585.97"/></g><g fill="#fdd532"><polygon points="2053.90,575.00 2059.54,585.97 2071.72,587.95 2063.03,596.71 2064.92,608.90 2053.90,603.34 2042.88,608.90 2044.77,596.71 2036.08,587.95 2048.26,585.97"/></g><g fill="#fdd532"><polygon points="2089.90,575.00 2095.54,585.97 2107.72,587.95 2099.03,596.71 2100.92,608.90 2089.90,603.34 2078.88,608.90 2080.77,596.71 2072.08,587.95 2084.26,585.97"/></g><g fill="#fdd532"><polygon points="2125.90,575.00 2131.54,585.97 2143.72,587.95 2135.03,596.71 2136.92,608.90 2125.90,603.34 2114.88,608.90 2116.77,596.71 2108.08,587.95 2120.26,585.97"/></g><rect x="1444" y="644" width="6" height="12"/><rect x="1453" y="632" width="6" height="24"/><rect x="1462" y="639" width="6" height="17"/><g fill="#fdd532"><polygon points="1981.90,627.00 1987.54,637.97 1999.72,639.95 1991.03,648.71 1992.92,660.90 1981.90,655.34 1970.88,660.90 1972.77,648.71 1964.08,639.95 1976.26,637.97"/></g><g fill="#fdd532"><polygon points="2017.90,627.00 2023.54,637.97 2035.72,639.95 2027.03,648.71 2028.92,660.90 2017.90,655.34 2006.88,660.90 2008.77,648.71 2000.08,639.95 2012.26,637.97"/></g><g fill="#fdd532"><polygon points="2053.90,627.00 2059.54,637.97 2071.72,639.95 2063.03,648.71 2064.92,660.90 2053.90,655.34 2042.88,660.90 2044.77,648.71 2036.08,639.95 2048.26,637.97"/></g><g fill="#fdd532"><polygon points="2089.90,627.00 2095.54,637.97 2107.72,639.95 2099.03,648.71 2100.92,660.90 2089.90,655.34 2078.88,660.90 2080.77,648.71 2072.08,639.95 2084.26,637.97"/></g><g fill="#fdd532"><polygon points="2125.90,627.00 2131.54,637.97 2143.72,639.95 2135.03,648.71 2136.92,660.90 2125.90,655.34 2114.88,660.90 2116.77,648.71 2108.08,639.95 2120.26,637.97"/></g><rect x="1444" y="696" width="6" height="12"/><rect x="1453" y="684" width="6" height="24"/><rect x="1462" y="691" width="6" height="17"/><g fill="#fdd532"><polygon points="1981.90,679.00 1987.54,689.97 1999.72,691.95 1991.03,700.71 1992.92,712.90 1981.90,707.34 1970.88,712.90 1972.77,700.71 1964.08,691.95 1976.26,689.97"/></g><g fill="#fdd532"><polygon points="2017.90,679.00 2023.54,689.97 2035.72,691.95 2027.03,700.71 2028.92,712.90 2017.90,707.34 2006.88,712.90 2008.77,700.71 2000.08,691.95 2012.26,689.97"/></g><g fill="#fdd532"><polygon points="2053.90,679.00 2059.54,689.97 2071.72,691.95 2063.03,700.71 2064.92,712.90 2053.90,707.34 2042.88,712.90 2044.77,700.71 2036.08,691.95 2048.26,689.97"/></g><g fill="#fdd532"><polygon points="2089.90,679.00 2095.54,689.97 2107.72,691.95 2099.03,700.71 2100.92,712.90 2089.90,707.34 2078.88,712.90 2080.77,700.71 2072.08,691.95 2084.26,689.97"/></g><g fill="#fdd532"><polygon points="2125.90,679.00 2131.54,689.97 2143.72,691.95 2135.03,700.71 2136.92,712.90 2125.90,707.34 2114.88,712.90 2116.77,700.71 2108.08,691.95 2120.26,689.97"/></g><rect x="1444" y="748" width="6" height="12"/><rect x="1453" y="736" width="6" height="24"/><rect x="1462" y="743" width="6" height="17"/><g fill="#fdd532"><polygon points="1981.90,731.00 1987.54,741.97 1999.72,743.95 1991.03,752.71 1992.92,764.90 1981.90,759.34 1970.88,764.90 1972.77,752.71 1964.08,743.95 1976.26,741.97"/></g><g fill="#fdd532"><polygon points="2017.90,731.00 2023.54,741.97 2035.72,743.95 2027.03,752.71 2028.92,764.90 2017.90,759.34 2006.88,764.90 2008.77,752.71 2000.08,743.95 2012.26,741.97"/></g><g fill="#fdd532"><polygon points="2053.90,731.00 2059.54,741.97 2071.72,743.95 2063.03,752.71 2064.92,764.90 2053.90,759.34 2042.88,764.90 2044.77,752.71 2036.08,743.95 2048.26,741.97"/></g><g fill="#fdd532"><polygon points="2089.90,731.00 2095.54,741.97 2107.72,743.95 2099.03,752.71 2100.92,764.90 2089.90,759.34 2078.88,764.90 2080.77,752.71 2072.08,743.95 2084.26,741.97"/></g><g fill="#fdd532"><polygon points="2125.90,731.00 2131.54,741.97 2143.72,743.95 2135.03,752.71 2136.92,764.90 2125.90,759.34 2114.88,764.90 2116.77,752.71 2108.08,743.95 2120.26,741.97"/></g><rect x="1444" y="800" width="6" height="12"/><rect x="1453" y="788" width="6" height="24"/><rect x="1462" y="795" width="6" height="17"/><g fill="#fdd532"><polygon points="1981.90,783.00 1987.54,793.97 1999.72,795.95 1991.03,804.71 1992.92,816.90 1981.90,811.34 1970.88,816.90 1972.77,804.71 1964.08,795.95 1976.26,793.97"/></g><g fill="#fdd532"><polygon points="2017.90,783.00 2023.54,793.97 2035.72,795.95 2027.03,804.71 2028.92,816.90 2017.90,811.34 2006.88,816.90 2008.77,804.71 2000.08,795.95 2012.26,793.97"/></g><g fill="#fdd532"><polygon points="2053.90,783.00 2059.54,793.97 2071.72,795.95 2063.03,804.71 2064.92,816.90 2053.90,811.34 2042.88,816.90 2044.77,804.71 2036.08,795.95 2048.26,793.97"/></g><g fill="#fdd532"><polygon points="2089.90,783.00 2095.54,793.97 2107.72,795.95 2099.03,804.71 2100.92,816.90 2089.90,811.34 2078.88,816.90 2080.77,804.71 2072.08,795.95 2084.26,793.97"/></g><g fill="#fdd532"><polygon points="2125.90,783.00 2131.54,793.97 2143.72,795.95 2135.03,804.71 2136.92,816.90 2125.90,811.34 2114.88,816.90 2116.77,804.71 2108.08,795.95 2120.26,793.97"/></g><rect x="1444" y="852" width="6" height="12"/><rect x="1453" y="840" width="6" height="24"/><rect x="1462" y="847" width="6" height="17"/><g fill="#fdd532"><polygon points="1981.90,835.00 1987.54,845.97 1999.72,847.95 1991.03,856.71 1992.92,868.90 1981.90,863.34 1970.88,868.90 1972.77,856.71 1964.08,847.95 1976.26,845.97"/></g><g fill="#fdd532"><polygon points="2017.90,835.00 2023.54,845.97 2035.72,847.95 2027.03,856.71 2028.92,868.90 2017.90,863.34 2006.88,868.90 2008.77,856.71 2000.08,847.95 2012.26,845.97"/></g><g fill="#fdd532"><polygon points="2053.90,835.00 2059.54,845.97 2071.72,847.95 2063.03,856.71 2064.92,868.90 2053.90,863.34 2042.88,868.90 2044.77,856.71 2036.08,847.95 2048.26,845.97"/></g><g fill="#fdd532"><polygon points="2089.90,835.00 2095.54,845.97 2107.72,847.95 2099.03,856.71 2100.92,868.90 2089.90,863.34 2078.88,868.90 2080.77,856.71 2072.08,847.95 2084.26,845.97"/></g><g fill="#fdd532"><polygon points="2125.90,835.00 2131.54,845.97 2143.72,847.95 2135.03,856.71 2136.92,868.90 2125.90,863.34 2114.88,868.90 2116.77,856.71 2108.08,847.95 2120.26,845.97"/></g><rect x="1444" y="904" width="6" height="12"/><rect x="1453" y="892" width="6" height="24"/><rect x="1462" y="899" width="6" height="17"/><g fill="#fdd532"><polygon points="1981.90,887.00 1987.54,897.97 1999.72,899.95 1991.03,908.71 1992.92,920.90 1981.90,915.34 1970.88,920.90 1972.77,908.71 1964.08,899.95 1976.26,897.97"/></g><g fill="#fdd532"><polygon points="2017.90,887.00 2023.54,897.97 2035.72,899.95 2027.03,908.71 2028.92,920.90 2017.90,915.34 2006.88,920.90 2008.77,908.71 2000.08,899.95 2012.26,897.97"/></g><g fill="#fdd532"><polygon points="2053.90,887.00 2059.54,897.97 2071.72,899.95 2063.03,908.71 2064.92,920.90 2053.90,915.34 2042.88,920.90 2044.77,908.71 2036.08,899.95 2048.26,897.97"/></g><g fill="#fdd532"><polygon points="2089.90,887.00 2095.54,897.97 2107.72,899.95 2099.03,908.71 2100.92,920.90 2089.90,915.34 2078.88,920.90 2080.77,908.71 2072.08,899.95 2084.26,897.97"/></g><g fill="#fdd532"><polygon points="2125.90,887.00 2131.54,897.97 2143.72,899.95 2135.03,908.71 2136.92,920.90 2125.90,915.34 2114.88,920.90 2116.77,908.71 2108.08,899.95 2120.26,897.97"/></g><rect x="1444" y="956" width="6" height="12"/><rect x="1453" y="944" width="6" height="24"/><rect x="1462" y="951" width="6" height="17"/><g fill="#fdd532"><polygon points="1981.90,939.00 1987.54,949.97 1999.72,951.95 1991.03,960.71 1992.92,972.90 1981.90,967.34 1970.88,972.90 1972.77,960.71 1964.08,951.95 1976.26,949.97"/></g><g fill="#fdd532"><polygon points="2017.90,939.00 2023.54,949.97 2035.72,951.95 2027.03,960.71 2028.92,972.90 2017.90,967.34 2006.88,972.90 2008.77,960.71 2000.08,951.95 2012.26,949.97"/></g><g fill="#fdd532"><polygon points="2053.90,939.00 2059.54,949.97 2071.72,951.95 2063.03,960.71 2064.92,972.90 2053.90,967.34 2042.88,972.90 2044.77,960.71 2036.08,951.95 2048.26,949.97"/></g><g fill="#fdd532"><polygon points="2089.90,939.00 2095.54,949.97 2107.72,951.95 2099.03,960.71 2100.92,972.90 2089.90,967.34 2078.88,972.90 2080.77,960.71 2072.08,951.95 2084.26,949.97"/></g><g fill="#fdd532"><polygon points="2125.90,939.00 2131.54,949.97 2143.72,951.95 2135.03,960.71 2136.92,972.90 2125.90,967.34 2114.88,972.90 2116.77,960.71 2108.08,951.95 2120.26,949.97"/></g><rect x="1444" y="1008" width="6" height="12"/><rect x="1453" y="996" width="6" height="24"/><rect x="1462" y="1003" width="6" height="17"/><g fill="#fdd532"><polygon points="1981.90,991.00 1987.54,1001.97 1999.72,1003.95 1991.03,1012.71 1992.92,1024.90 1981.90,1019.34 1970.88,1024.90 1972.77,1012.71 1964.08,1003.95 1976.26,1001.97"/></g><g fill="#fdd532"><polygon points="2017.90,991.00 2023.54,1001.97 2035.72,1003.95 2027.03,1012.71 2028.92,1024.90 2017.90,1019.34 2006.88,1024.90 2008.77,1012.71 2000.08,1003.95 2012.26,1001.97"/></g><g fill="#fdd532"><polygon points="2053.90,991.00 2059.54,1001.97 2071.72,1003.95 2063.03,1012.71 2064.92,1024.90 2053.90,1019.34 2042.88,1024.90 2044.77,1012.71 2036.08,1003.95 2048.26,1001.97"/></g><g fill="#fdd532"><polygon points="2089.90,991.00 2095.54,1001.97 2107.72,1003.95 2099.03,1012.71 2100.92,1024.90 2089.90,1019.34 2078.88,1024.90 2080.77,1012.71 2072.08,1003.95 2084.26,1001.97"/></g><g fill="#fdd532"><polygon points="2125.90,991.00 2131.54,1001.97 2143.72,1003.95 2135.03,1012.71 2136.92,1024.90 2125.90,1019.34 2114.88,1024.90 2116.77,1012.71 2108.08,1003.95 2120.26,1001.97"/></g><rect x="1444" y="1060" width="6" height="12"/><rect x="1453" y="1048" width="6" height="24"/><rect x="1462" y="1055" width="6" height="17"/><g fill="#fdd532"><polygon points="1981.90,1043.00 1987.54,1053.97 1999.72,1055.95 1991.03,1064.71 1992.92,1076.90 1981.90,1071.34 1970.88,1076.90 1972.77,1064.71 1964.08,1055.95 1976.26,1053.97"/></g><g fill="#fdd532"><polygon points="2017.90,1043.00 2023.54,1053.97 2035.72,1055.95 2027.03,1064.71 2028.92,1076.90 2017.90,1071.34 2006.88,1076.90 2008.77,1064.71 2000.08,1055.95 2012.26,1053.97"/></g><g fill="#fdd532"><polygon points="2053.90,1043.00 2059.54,1053.97 2071.72,1055.95 2063.03,1064.71 2064.92,1076.90 2053.90,1071.34 2042.88,1076.90 2044.77,1064.71 2036.08,1055.95 2048.26,1053.97"/></g><g fill="#fdd532"><polygon points="2089.90,1043.00 2095.54,1053.97 2107.72,1055.95 2099.03,1064.71 2100.92,1076.90 2089.90,1071.34 2078.88,1076.90 2080.77,1064.71 2072.08,1055.95 2084.26,1053.97"/></g><g fill="#fdd532"><polygon points="2125.90,1043.00 2131.54,1053.97 2143.72,1055.95 2135.03,1064.71 2136.92,1076.90 2125.90,1071.34 2114.88,1076.90 2116.77,1064.71 2108.08,1055.95 2120.26,1053.97"/></g><rect x="1444" y="1112" width="6" height="12"/><rect x="1453" y="1100" width="6" height="24"/><rect x="1462" y="1107" width="6" height="17"/><g fill="#fdd532"><polygon points="1981.90,1095.00 1987.54,1105.97 1999.72,1107.95 1991.03,1116.71 1992.92,1128.90 1981.90,1123.34 1970.88,1128.90 1972.77,1116.71 1964.08,1107.95 1976.26,1105.97"/></g><g fill="#fdd532"><polygon points="2017.90,1095.00 2023.54,1105.97 2035.72,1107.95 2027.03,1116.71 2028.92,1128.90 2017.90,1123.34 2006.88,1128.90 2008.77,1116.71 2000.08,1107.95 2012.26,1105.97"/></g><g fill="#fdd532"><polygon points="2053.90,1095.00 2059.54,1105.97 2071.72,1107.95 2063.03,1116.71 2064.92,1128.90 2053.90,1123.34 2042.88,1128.90 2044.77,1116.71 2036.08,1107.95 2048.26,1105.97"/></g><g fill="#fdd532"><polygon points="2089.90,1095.00 2095.54,1105.97 2107.72,1107.95 2099.03,1116.71 2100.92,1128.90 2089.90,1123.34 2078.88,1128.90 2080.77,1116.71 2072.08,1107.95 2084.26,1105.97"/></g><g fill="#fdd532"><polygon points="2125.90,1095.00 2131.54,1105.97 2143.72,1107.95 2135.03,1116.71 2136.92,1128.90 2125.90,1123.34 2114.88,1128.90 2116.77,1116.71 2108.08,1107.95 2120.26,1105.97"/></g><rect x="1444" y="1164" width="6" height="12"/><rect x="1453" y="1152" width="6" height="24"/><rect x="1462" y="1159" width="6" height="17"/><g fill="#fdd532"><polygon points="1981.90,1147.00 1987.54,1157.97 1999.72,1159.95 1991.03,1168.71 1992.92,1180.90 1981.90,1175.34 1970.88,1180.90 1972.77,1168.71 1964.08,1159.95 1976.26,1157.97"/></g><g fill="#fdd532"><polygon points="2017.90,1147.00 2023.54,1157.97 2035.72,1159.95 2027.03,1168.71 2028.92,1180.90 2017.90,1175.34 2006.88,1180.90 2008.77,1168.71 2000.08,1159.95 2012.26,1157.97"/></g><g fill="#fdd532"><polygon points="2053.90,1147.00 2059.54,1157.97 2071.72,1159.95 2063.03,1168.71 2064.92,1180.90 2053.90,1175.34 2042.88,1180.90 2044.77,1168.71 2036.08,1159.95 2048.26,1157.97"/></g><g fill="#fdd532"><polygon points="2089.90,1147.00 2095.54,1157.97 2107.72,1159.95 2099.03,1168.71 2100.92,1180.90 2089.90,1175.34 2078.88,1180.90 2080.77,1168.71 2072.08,1159.95 2084.26,1157.97"/></g><g fill="#fdd532"><polygon points="2125.90,1147.00 2131.54,1157.97 2143.72,1159.95 2135.03,1168.71 2136.92,1180.90 2125.90,1175.34 2114.88,1180.90 2116.77,1168.71 2108.08,1159.95 2120.26,1157.97"/></g><rect x="1444" y="1216" width="6" height="12"/><rect x="1453" y="1204" width="6" height="24"/><rect x="1462" y="1211" width="6" height="17"/><g fill="#fdd532"><polygon points="1981.90,1199.00 1987.54,1209.97 1999.72,1211.95 1991.03,1220.71 1992.92,1232.90 1981.90,1227.34 1970.88,1232.90 1972.77,1220.71 1964.08,1211.95 1976.26,1209.97"/></g><g fill="#fdd532"><polygon points="2017.90,1199.00 2023.54,1209.97 2035.72,1211.95 2027.03,1220.71 2028.92,1232.90 2017.90,1227.34 2006.88,1232.90 2008.77,1220.71 2000.08,1211.95 2012.26,1209.97"/></g><g fill="#fdd532"><polygon points="2053.90,1199.00 2059.54,1209.97 2071.72,1211.95 2063.03,1220.71 2064.92,1232.90 2053.90,1227.34 2042.88,1232.90 2044.77,1220.71 2036.08,1211.95 2048.26,1209.97"/></g><g fill="#fdd532"><polygon points="2089.90,1199.00 2095.54,1209.97 2107.72,1211.95 2099.03,1220.71 2100.92,1232.90 2089.90,1227.34 2078.88,1232.90 2080.77,1220.71 2072.08,1211.95 2084.26,1209.97"/></g><g fill="#fdd532"><polygon points="2125.90,1199.00 2131.54,1209.97 2143.72,1211.95 2135.03,1220.71 2136.92,1232.90 2125.90,1227.34 2114.88,1232.90 2116.77,1220.71 2108.08,1211.95 2120.26,1209.97"/></g></g></svg>
</body></html>
